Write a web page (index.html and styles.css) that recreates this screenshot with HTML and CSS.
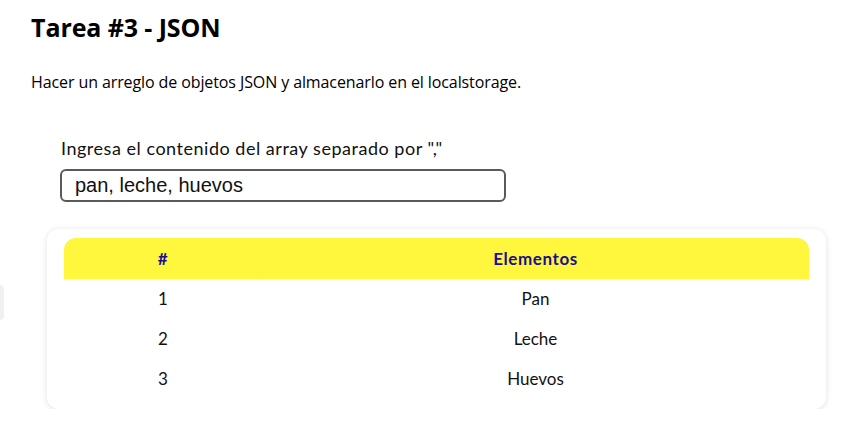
FILE: index.html
```html
<!DOCTYPE html>
<html lang="es">
<head>
<meta charset="utf-8">
<title>Tarea #3 - JSON</title>
<link rel="stylesheet" href="styles.css">
</head>
<body>
<div class="edge-tab"></div>
<main class="page">
  <h1 class="title">Tarea #3 - JSON</h1>
  <p class="desc">Hacer un arreglo de objetos JSON y almacenarlo en el localstorage.</p>
  <section class="form">
    <label class="label" for="items">Ingresa el contenido del array separado por ","</label>
    <input class="input" id="items" type="text" value="pan, leche, huevos">
  </section>
  <section class="card">
    <table class="table">
      <thead>
        <tr><th class="col-num">#</th><th>Elementos</th></tr>
      </thead>
      <tbody>
        <tr><td>1</td><td>Pan</td></tr>
        <tr><td>2</td><td>Leche</td></tr>
        <tr><td>3</td><td>Huevos</td></tr>
      </tbody>
    </table>
  </section>
</main>
</body>
</html>
```

FILE: styles.css
```css
html, body {
  margin: 0;
  padding: 0;
  background: #ffffff;
  overflow: hidden;
}
body {
  font-family: "Open Sans", "Noto Sans", sans-serif;
  color: #000;
}
.edge-tab {
  position: absolute;
  left: -8px;
  top: 285px;
  width: 12px;
  height: 35px;
  background: #f0f0f0;
  border-radius: 4px;
}
.page {
  padding: 11px 37px 0 31px;
}
.title {
  margin: 0;
  font-size: 25px;
  font-weight: 700;
  line-height: 32px;
  letter-spacing: -0.1px;
}
.desc {
  margin: 28px 0 0;
  font-size: 16px;
  line-height: 22px;
  letter-spacing: -0.1px;
}
.form {
  display: flex;
  flex-direction: column;
  align-items: flex-start;
  margin: 44px 0 0 29px;
}
.label {
  font-family: "Lato", sans-serif;
  font-size: 18px;
  line-height: 22px;
  letter-spacing: 0.52px;
  color: #111;
  margin-left: 1px;
}
.input {
  margin-top: 10px;
  width: 446px;
  height: 33px;
  box-sizing: border-box;
  border: 2px solid #5a5a5a;
  border-radius: 6px;
  padding: 0 13px;
  font-family: "Liberation Sans", Arial, sans-serif;
  font-size: 20px;
  color: #111;
  background: #fff;
}
.card {
  margin: 27px 0 0 16px;
  width: 779px;
  box-sizing: border-box;
  padding: 9px 17px;
  background: #fff;
  border-radius: 12px;
  box-shadow: 0 1px 6px rgba(0, 0, 0, 0.12);
}
.table {
  width: 100%;
  border-collapse: separate;
  border-spacing: 0;
  font-family: "Lato", sans-serif;
}
.table th {
  background: #fff73d;
  color: #1c0f8f;
  font-size: 17px;
  font-weight: 700;
  letter-spacing: 0.6px;
  height: 40px;
  padding: 0 0 1px;
  text-align: center;
  box-shadow: 0 2px 2px rgba(0, 0, 0, 0.04);
}
.table th:first-child {
  border-top-left-radius: 12px;
}
.table th:last-child {
  border-top-right-radius: 12px;
}
.col-num {
  width: 198px;
}
.table td {
  height: 37px;
  padding: 0 0 3px;
  text-align: center;
  font-size: 17px;
  color: #111;
}
.table tbody tr:first-child td {
  height: 38px;
}
```
